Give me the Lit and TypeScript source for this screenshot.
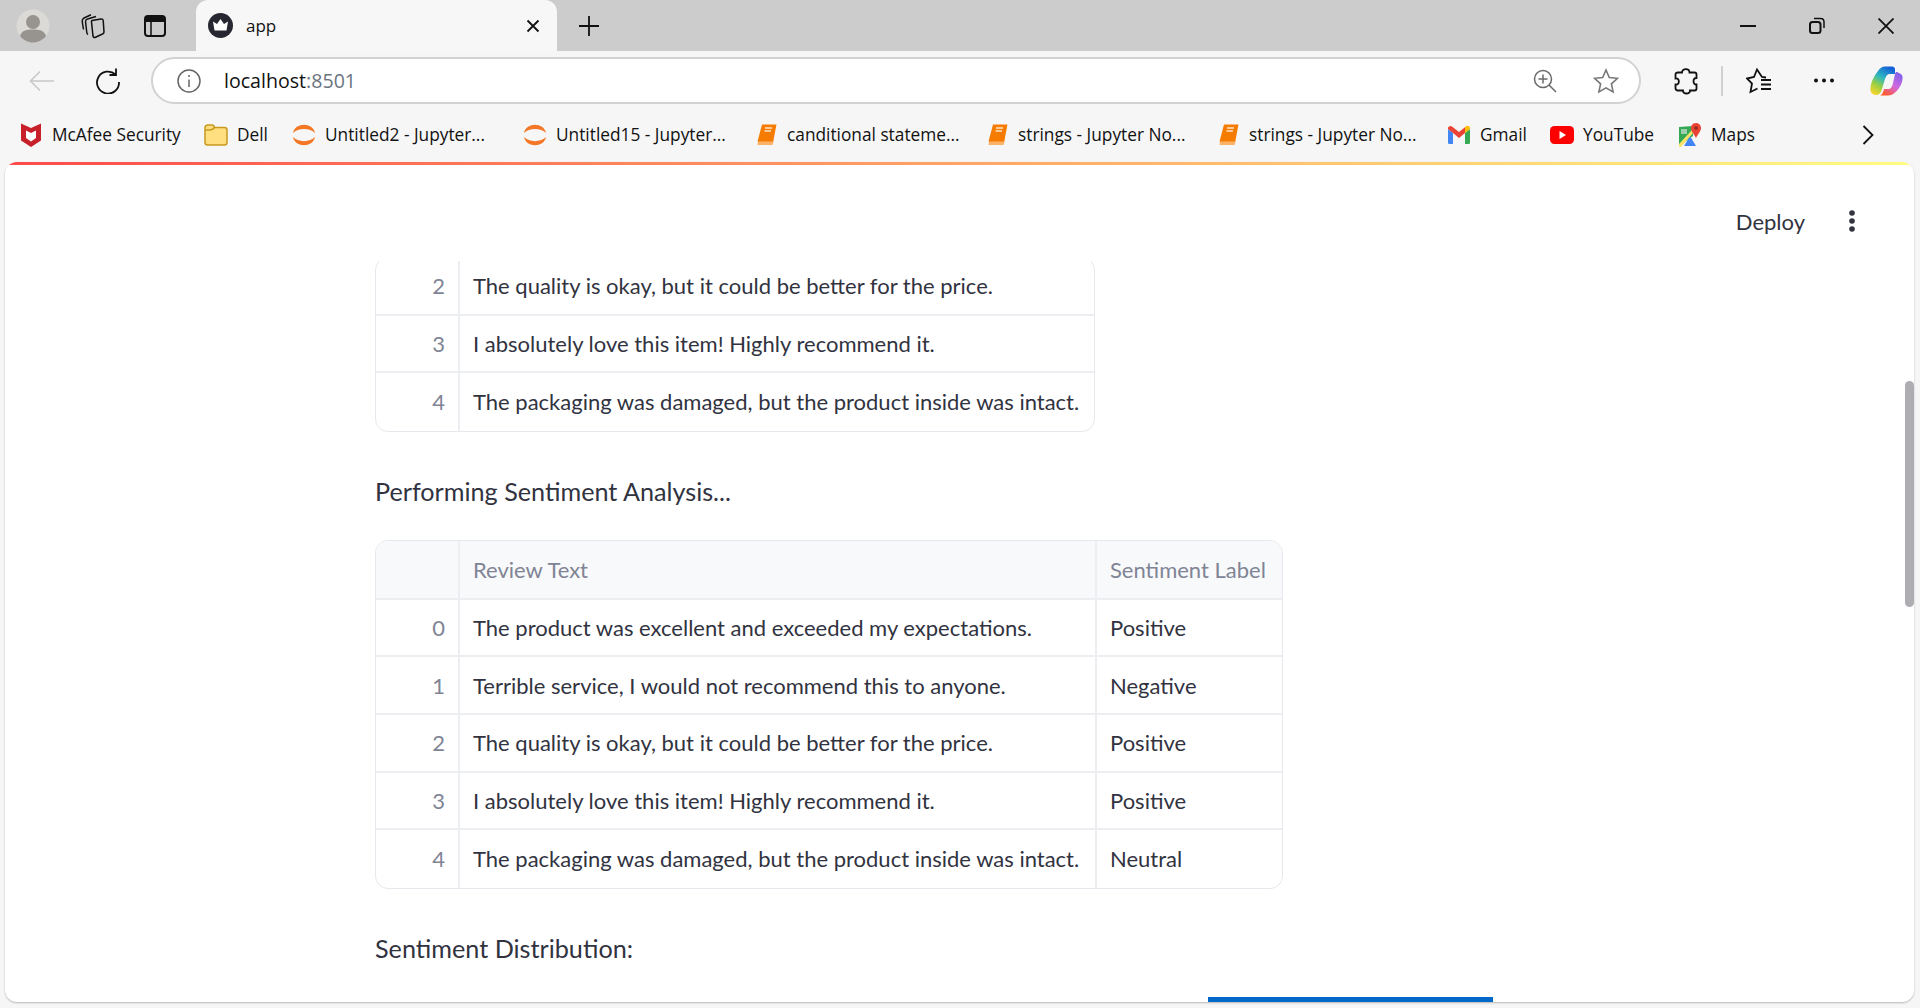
import { LitElement, html, css } from 'lit';
import { customElement } from 'lit/decorators.js';

const jupyter = html`<svg width="24" height="24" viewBox="0 0 24 24"><path fill="#f37726" d="M1 10C3-1 21-1 23 10 18 4.500 6 4.500 1 10Z"/><path fill="#f37726" d="M1 14C6 19.500 18 19.500 23 14 21 25 3 25 1 14Z"/></svg>`;
const book = html`<svg width="24" height="24" viewBox="-2 0 24 24"><path fill="#f57c00" d="M6 1.500H20.500L17 20H3.500C2 20 1.500 19 1.800 17.500Z"/><path fill="#fbb168" d="M2.200 18.500 1.500 22H16.500L17.500 18.500Z"/><path stroke="#fde3c8" stroke-width="1.500" d="M9 5H16M8.500 8H15"/></svg>`;

const icons: Record<string, unknown> = {
  mcafee: html`<svg width="22" height="26" viewBox="0 0 22 26"><path fill="#c8202b" d="M1 1.500 11 6 21 1.500V18.500L11 25 1 18.500Z"/><path fill="#fff" d="M6 8.500 11 11 16 8.500V16L11 19.500 6 16Z"/></svg>`,
  folder: html`<svg width="24" height="24" viewBox="0 0 24 24"><path fill="#ffdf80" stroke="#c9991f" stroke-width="1.500" d="M1 5Q1 2 4 2H8Q10 2 10.500 4.500H20.500Q23 4.500 23 7V19.500Q23 22 20.500 22H3.500Q1 22 1 19.500Z"/><path fill="none" stroke="#c9991f" stroke-width="1.500" d="M1 7H6Q9 7 10.500 4.500"/></svg>`,
  jupyter,
  book,
  gmail: html`<svg width="24" height="20" viewBox="0 0 24 20"><path fill="#4285f4" d="M1 4V18Q1 19 2.500 19H6V8Z"/><path fill="#34a853" d="M18 8V19H21.500Q23 19 23 18V4Z"/><path fill="#ea4335" d="M1 2.500Q2.500 0 5 1.500L12 7 19 1.500 18 8 12 13 6 8 1 4Z"/><path fill="#fbbc04" d="M18 2.300 19.500 1Q22 0 23 2.500V4L18 8Z"/></svg>`,
  youtube: html`<svg width="24" height="18" viewBox="0 0 24 18"><rect width="24" height="18" rx="4.500" fill="#ff0000"/><path fill="#fff" d="M9.500 5 16 9 9.500 13Z"/></svg>`,
  maps: html`<svg width="24" height="26" viewBox="0 0 24 26"><path fill="#34a853" d="M1 5 15 4V14L1 24Z"/><path fill="#4285f4" d="M6 24 12 14 18 24Z"/><path fill="#fbe36b" d="M1 22 14 8 15 11 3 25H1Z"/><path fill="#e8e8e8" d="M3 7h6v5H3z" opacity=".6"/><path fill="#ea4335" d="M18 1C14.500 1 13 4 13 6 13 9 16 12 18 16 20 12 23 9 23 6 23 3.500 21 1 18 1Z"/><circle cx="18" cy="6" r="1.800" fill="#8f2a20"/></svg>`,
};

const bookmarks = [
  { icon: 'mcafee', label: 'McAfee Security', width: 185 },
  { icon: 'folder', label: 'Dell', width: 88 },
  { icon: 'jupyter', label: 'Untitled2 - Jupyter...', width: 231 },
  { icon: 'jupyter', label: 'Untitled15 - Jupyter...', width: 231 },
  { icon: 'book', label: 'canditional stateme...', width: 231 },
  { icon: 'book', label: 'strings - Jupyter No...', width: 231 },
  { icon: 'book', label: 'strings - Jupyter No...', width: 231 },
  { icon: 'gmail', label: 'Gmail', width: 103 },
  { icon: 'youtube', label: 'YouTube', width: 128 },
  { icon: 'maps', label: 'Maps', width: 100 },
];

const reviews = [
  ['The product was excellent and exceeded my expectations.', 'Positive'],
  ['Terrible service, I would not recommend this to anyone.', 'Negative'],
  ['The quality is okay, but it could be better for the price.', 'Positive'],
  ['I absolutely love this item! Highly recommend it.', 'Positive'],
  ['The packaging was damaged, but the product inside was intact.', 'Neutral'],
];

@customElement('app-root')
export class AppRoot extends LitElement {
  static styles = css`
    :host {
      display: flex;
      flex-direction: column;
      height: 1008px;
      overflow: hidden;
      background: #f6f6f6;
      font-family: 'Open Sans', sans-serif;
      color: #111;
    }

    svg {
      display: block;
      flex: none;
    }

    /* tab strip */
    .strip {
      display: flex;
      align-items: center;
      flex: none;
      height: 51px;
      background: #cccccc;
    }

    .strip-btn {
      display: flex;
      align-items: center;
      justify-content: center;
      flex: none;
      width: 60px;
      height: 51px;
    }

    .profile {
      width: 66px;
    }

    .collections {
      width: 51px;
    }

    .vtabs {
      width: 75px;
    }

    .new-tab {
      margin-left: 2px;
    }

    .tab {
      display: flex;
      align-items: center;
      flex: none;
      box-sizing: border-box;
      width: 361px;
      height: 51px;
      margin-left: 4px;
      padding: 0 17px 0 12px;
      background: #f7f7f7;
      border-radius: 12px 12px 0 0;
      font-size: 17px;
    }

    .tab-title {
      flex: 1;
      margin-left: 13px;
    }

    .controls {
      display: flex;
      margin-left: auto;
    }

    .controls .strip-btn {
      width: 69px;
    }

    /* toolbar */
    .toolbar {
      display: flex;
      align-items: center;
      flex: none;
      height: 59px;
      padding-left: 9px;
    }

    .tool {
      display: flex;
      align-items: center;
      justify-content: center;
      flex: none;
      width: 66px;
      height: 50px;
    }

    .omnibox {
      display: flex;
      align-items: center;
      flex: none;
      box-sizing: border-box;
      width: 1490px;
      height: 47px;
      margin-left: 10px;
      padding: 0 20px 0 24px;
      background: #fff;
      border: 2px solid #d2d2d2;
      border-radius: 24px;
      font-size: 19.6px;
    }

    .url {
      flex: 1;
      margin-left: 23px;
    }

    .url span {
      color: #6b7480;
    }

    .omni-gap {
      margin-left: 36px;
    }

    .sep {
      flex: none;
      width: 2px;
      height: 30px;
      margin: 0 11px 0 10px;
      background: #d0d0d0;
    }

    .tool.wide {
      width: 50px;
    }

    .tool.ext {
      margin-left: 20px;
    }

    .tool.dots {
      margin-left: 15px;
    }

    .tool.copilot {
      margin-left: 12px;
    }

    /* bookmarks */
    .bookmarks {
      display: flex;
      align-items: center;
      flex: none;
      box-sizing: border-box;
      height: 52px;
      padding: 0 0 3px 19px;
      font-size: 17.3px;
    }

    .bookmark {
      display: flex;
      align-items: center;
      flex: none;
      gap: 9px;
    }

    .bm-icon {
      display: flex;
      justify-content: center;
      width: 24px;
    }

    .more {
      margin-left: 84px;
    }

    /* page */
    .page {
      position: relative;
      display: flex;
      flex-direction: column;
      flex: 1;
      min-height: 0;
      margin: 0 6px 6px 5px;
      overflow: hidden;
      background: #fff;
      border-radius: 12px;
      box-shadow: 0 1px 2px rgba(0, 0, 0, 0.25);
      font-family: Lato, sans-serif;
      color: #31333f;
    }

    .rainbow {
      flex: none;
      height: 3px;
      background: linear-gradient(90deg, #ff4b4b, #fffd80);
    }

    .app-header {
      display: flex;
      justify-content: flex-end;
      align-items: center;
      flex: none;
      box-sizing: border-box;
      height: 96px;
      padding: 16px 59px 0 0;
      gap: 44px;
      font-size: 22px;
    }

    .scroll {
      flex: 1;
      min-height: 0;
      padding-left: 370px;
      overflow: hidden;
    }

    .table {
      box-sizing: border-box;
      background: #fff;
      border: 1px solid #e6e8ed;
      border-radius: 13px;
      overflow: hidden;
      font-size: 22px;
    }

    .table.short {
      width: 720px;
      margin-top: -4px;
      --cols: 82px 637px;
    }

    .table.full {
      width: 908px;
      --cols: 82px 637px 187px;
    }

    .row {
      display: grid;
      grid-template-columns: var(--cols);
      box-sizing: border-box;
      height: 57.6px;
      border-bottom: 2px solid #eceef1;
    }

    .row:last-child {
      border-bottom: 0;
    }

    .cell {
      display: flex;
      align-items: center;
      box-sizing: border-box;
      padding: 0 13px;
      border-left: 2px solid #eceef1;
      white-space: nowrap;
    }

    .cell.index {
      justify-content: flex-end;
      border-left: 0;
      color: #808495;
    }

    .row.head {
      height: 59px;
      background: #f8f9fb;
      color: #808495;
    }

    .para {
      height: 39px;
      margin: 40px 0 29px;
      font-size: 25.2px;
      line-height: 39px;
    }

    .chart-bar {
      width: 285px;
      height: 5px;
      margin-left: 833px;
      background: #0068c9;
    }

    .scrollbar {
      position: absolute;
      top: 219px;
      right: 0;
      width: 9px;
      height: 226px;
      background: #aeadb2;
      border-radius: 4.5px;
    }
  `;

  private _row(index: number, cells: string[]) {
    return html`
      <div class="row">
        <div class="cell index">${index}</div>
        ${cells.map((c) => html`<div class="cell">${c}</div>`)}
      </div>
    `;
  }

  private _strip() {
    return html`
      <div class="strip">
        <div class="strip-btn profile">
          <svg width="34" height="34" viewBox="0 0 34 34">
            <circle cx="17" cy="17" r="16.500" fill="#dcdad6" />
            <circle cx="17" cy="13" r="7" fill="#979490" />
            <path fill="#979490" d="M4 27C6 21 11 20.500 17 20.500S28 21 30 27C27 31 22 33.500 17 33.500S7 31 4 27Z" />
          </svg>
        </div>
        <div class="strip-btn collections">
          <svg width="26" height="26" viewBox="0 0 26 26" fill="none" stroke="#111" stroke-width="1.500">
            <path d="M13 7.500 22 6Q24 5.800 24.200 7.500L25 19Q25 20.500 23.500 21L16 24.500Q14.500 25 14 23L12.500 9Q12.500 7.800 13 7.500Z" />
            <path d="M9 21.500Q8 21 7.800 19.500L6.500 8.500Q6.500 6.500 8.500 6L17 3.500" />
            <path d="M4.500 16.500 3.200 8.500Q3 6 5 5L12 1.800" />
          </svg>
        </div>
        <div class="strip-btn vtabs">
          <svg width="22" height="22" viewBox="0 0 22 22">
            <rect x="1" y="1" width="20" height="20" rx="3" fill="none" stroke="#111" stroke-width="2" />
            <path fill="#111" d="M1 4Q1 1 4 1H18Q21 1 21 4V7H1Z" />
            <path stroke="#111" stroke-width="1.500" d="M7 7V21" />
          </svg>
        </div>
        <div class="tab">
          <svg width="25" height="25" viewBox="0 0 25 25">
            <circle cx="12.500" cy="12.500" r="12.500" fill="#262730" />
            <path fill="#fff" d="M5 8.500 9 11 12.500 6 16 11 20 8.500 18.500 17.500H6.500Z" />
          </svg>
          <span class="tab-title">app</span>
          <svg width="14" height="14" viewBox="0 0 14 14" stroke="#111" stroke-width="1.800"><path d="M1.500 1.500 12.500 12.500M12.500 1.500 1.500 12.500" /></svg>
        </div>
        <div class="strip-btn new-tab">
          <svg width="22" height="22" viewBox="0 0 22 22" stroke="#111" stroke-width="1.800"><path d="M11 1V21M1 11H21" /></svg>
        </div>
        <div class="controls">
          <div class="strip-btn">
            <svg width="16" height="4" viewBox="0 0 16 4" stroke="#111" stroke-width="2"><path d="M0 2H16" /></svg>
          </div>
          <div class="strip-btn">
            <svg width="16" height="17" viewBox="0 0 16 17" fill="none" stroke="#111" stroke-width="2">
              <rect x="1" y="5" width="10.500" height="11" rx="2.500" />
              <path d="M5 1.500H11.500Q15 1.500 15 5V11" stroke-width="1.500" />
            </svg>
          </div>
          <div class="strip-btn">
            <svg width="16" height="16" viewBox="0 0 16 16" stroke="#111" stroke-width="1.800"><path d="M0.500 0.500 15.500 15.500M15.500 0.500 0.500 15.500" /></svg>
          </div>
        </div>
      </div>
    `;
  }

  private _toolbar() {
    return html`
      <div class="toolbar">
        <div class="tool">
          <svg width="26" height="22" viewBox="0 0 26 22" fill="none" stroke="#c8c8c8" stroke-width="1.600"><path d="M1.500 11H25M11 1.500 1.500 11 11 20.500" /></svg>
        </div>
        <div class="tool">
          <svg width="26" height="26" viewBox="0 0 26 26" fill="none" stroke="#111" stroke-width="1.800"><path d="M20.500 6.500A11 11 0 1 0 24 14M21 .5V7H14.500" /></svg>
        </div>
        <div class="omnibox">
          <svg width="24" height="24" viewBox="0 0 24 24" fill="none" stroke="#666" stroke-width="1.500"><circle cx="12" cy="12" r="11" /><path d="M12 10.500V18M12 6V8" /></svg>
          <div class="url">localhost<span>:8501</span></div>
          <svg width="24" height="24" viewBox="0 0 24 24" fill="none" stroke="#6a6a6a" stroke-width="1.500"><circle cx="10" cy="10" r="8.500" /><path d="M16 16 23 23M10 5.500V14.500M5.500 10H14.500" /></svg>
          <svg class="omni-gap" width="26" height="26" viewBox="0 0 26 26" fill="none" stroke="#777" stroke-width="1.600"><path d="M13 2 16.300 9.500 24.500 10.300 18.400 15.800 20.100 23.900 13 19.800 5.900 23.900 7.600 15.800 1.500 10.300 9.700 9.500Z" /></svg>
        </div>
        <div class="tool wide ext">
          <svg width="26" height="28" viewBox="0 0 26 28" fill="none" stroke="#111" stroke-width="1.800"><path d="M9 5.500C9 1 16.500 1 16.500 5.500H21.500Q23.500 5.500 23.500 7.500V11C19.500 10.500 19.500 18 23.500 17.500V21.500Q23.500 23.500 21.500 23.500H17C17.500 27.500 9.500 27.500 10 23.500H5Q2.500 23.500 2.500 21V17.500C7 18.500 7 10.500 2.500 11.500V7.500Q2.500 5.500 5 5.500Z" /></svg>
        </div>
        <div class="sep"></div>
        <div class="tool wide">
          <svg width="26" height="26" viewBox="0 0 26 26" fill="none" stroke="#111" stroke-width="1.800"><path d="M20 9.500 16 9 11 1.500 8 9 1 10.500 6 15.500 4.500 24 11.500 20.500" /><path d="M15 12H25M15 16.500H25M15 21H25" /></svg>
        </div>
        <div class="tool wide dots">
          <svg width="22" height="5" viewBox="0 0 22 5" fill="#111"><circle cx="3" cy="2.500" r="2" /><circle cx="11" cy="2.500" r="2" /><circle cx="19" cy="2.500" r="2" /></svg>
        </div>
        <div class="tool wide copilot">
          <svg width="33" height="30" viewBox="0 0 33 30">
            <defs>
              <linearGradient id="cpa" x1="0.700" y1="0" x2="0.200" y2="1">
                <stop offset="0" stop-color="#1560d8" />
                <stop offset="0.400" stop-color="#2fb8c0" />
                <stop offset="0.700" stop-color="#9ed03f" />
                <stop offset="1" stop-color="#f8d42e" />
              </linearGradient>
              <linearGradient id="cpb" x1="0.800" y1="0.100" x2="0.300" y2="1">
                <stop offset="0" stop-color="#8a62ea" />
                <stop offset="0.500" stop-color="#d268e0" />
                <stop offset="1" stop-color="#ff5a2c" />
              </linearGradient>
            </defs>
            <path fill="url(#cpa)" d="M15 .5H22C24 .5 25 2 25 3V8H20C17 8 16 10 15 13L12 23C11 27 9 29 6 29 2 29 0 26 .5 22 1 15 5 9 8 5 10 2 12 .5 15 .5Z" />
            <path fill="url(#cpb)" d="M18 29.500H10C12 28.500 13 27 14 23H18C21 23 22 21 23 17L25 8C26 5 27 6 29 7 32 8 33 10 32.500 13 32 19 28 24 25 26.500 23 28.500 21 29.500 18 29.500Z" />
          </svg>
        </div>
      </div>
    `;
  }

  private _bookmarks() {
    return html`
      <div class="bookmarks">
        ${bookmarks.map(
          (b) => html`
            <div class="bookmark" style="width:${b.width}px">
              <div class="bm-icon">${icons[b.icon]}</div>
              <span>${b.label}</span>
            </div>
          `,
        )}
        <svg class="more" width="12" height="20" viewBox="0 0 12 20" fill="none" stroke="#111" stroke-width="1.800"><path d="M1.500 1 10.500 10 1.500 19" /></svg>
      </div>
    `;
  }

  render() {
    return html`
      ${this._strip()} ${this._toolbar()} ${this._bookmarks()}
      <div class="page">
        <div class="rainbow"></div>
        <div class="app-header">
          <span>Deploy</span>
          <svg width="6" height="22" viewBox="0 0 6 22" fill="#31333f"><circle cx="3" cy="3" r="2.800" /><circle cx="3" cy="11" r="2.800" /><circle cx="3" cy="19" r="2.800" /></svg>
        </div>
        <div class="scroll">
          <div class="table short">
            ${reviews.slice(2).map((r, i) => this._row(i + 2, [r[0]]))}
          </div>
          <div class="para">Performing Sentiment Analysis...</div>
          <div class="table full">
            <div class="row head">
              <div class="cell index"></div>
              <div class="cell">Review Text</div>
              <div class="cell">Sentiment Label</div>
            </div>
            ${reviews.map((r, i) => this._row(i, r))}
          </div>
          <div class="para">Sentiment Distribution:</div>
          <div class="chart-bar"></div>
        </div>
        <div class="scrollbar"></div>
      </div>
    `;
  }
}

declare global {
  interface HTMLElementTagNameMap {
    'app-root': AppRoot;
  }
}
